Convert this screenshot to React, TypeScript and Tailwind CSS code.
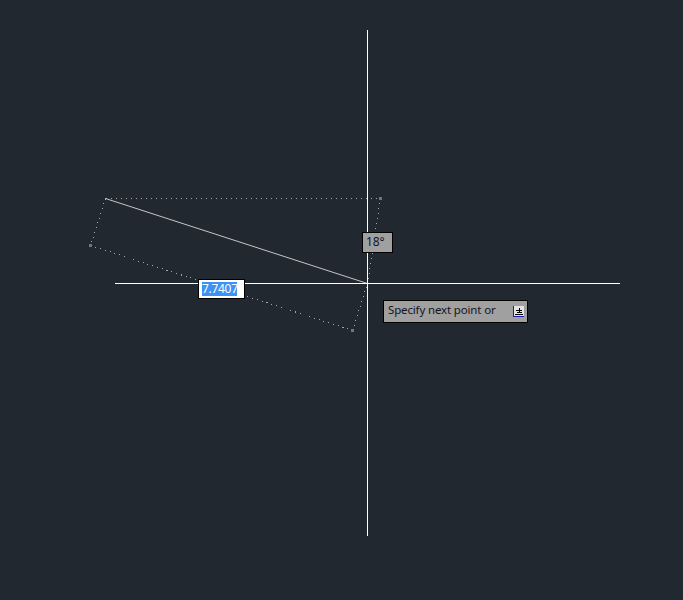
export default function App() {
  return (
    <div className="relative w-[683px] h-[600px] overflow-hidden bg-[#212830] font-['Noto_Sans',sans-serif] text-[11.5px] tracking-[-0.15px] leading-none">
      <svg className="absolute left-0 top-0" width="683" height="600" viewBox="0 0 683 600">
        <g stroke="#a4a8ab" strokeWidth="1" strokeDasharray="1 4" fill="none" shapeRendering="crispEdges">
          <path d="M105.5 198.5H380.5" />
          <path d="M380.5 198.5L367.5 283.5" />
          <path d="M105.5 198.5L90.5 245.5" />
          <path d="M90.5 245.5L352.5 330.5" />
          <path d="M352.5 330.5L367.5 283.5" />
        </g>
        <path d="M105.5 198.5L367.5 283.5" stroke="#c4c7c9" strokeWidth="1" />
        <rect x="379" y="197" width="3" height="3" fill="#70767b" />
        <rect x="89" y="244" width="3" height="3" fill="#70767b" />
        <rect x="351" y="329" width="3" height="3" fill="#70767b" />
        <path d="M367.5 30V536M115 283.5H620" stroke="#ffffff" strokeWidth="1" />
      </svg>
      <div className="absolute left-[198px] top-[279px] w-[47px] h-[20px] bg-white border border-black flex items-center pl-[3px]">
        <span className="bg-[#3b93f5] text-white h-[14px] leading-[13px] w-[35px] text-center text-[12px] tracking-[-0.3px]">7.7407</span>
      </div>
      <div className="absolute left-[362px] top-[232px] w-[31px] h-[21px] bg-[#a0a0a0] border border-black flex items-center pl-[3px] pb-[1px] text-[#14141e] text-[12px]">
        18°
      </div>
      <div className="absolute left-[383px] top-[300px] w-[145px] h-[23px] bg-[#a0a0a0] border border-black flex items-center pl-[4px] pb-[3px] text-[#14141e]">
        Specify next point or
        <svg className="absolute left-[129px] top-[5px]" width="12" height="12" viewBox="0 0 12 12">
          <rect x="1" y="0" width="10" height="11" fill="#e4e4e4" />
          <path d="M3 4.5H9M6 2V7M3.5 6.5H8.5M2 8.5H10" stroke="#000" strokeWidth="1" shapeRendering="crispEdges" />
          <path d="M0.5 0V10.5H10.5" stroke="#1a1ab0" strokeWidth="1" fill="none" shapeRendering="crispEdges" />
        </svg>
      </div>
    </div>
  );
}
